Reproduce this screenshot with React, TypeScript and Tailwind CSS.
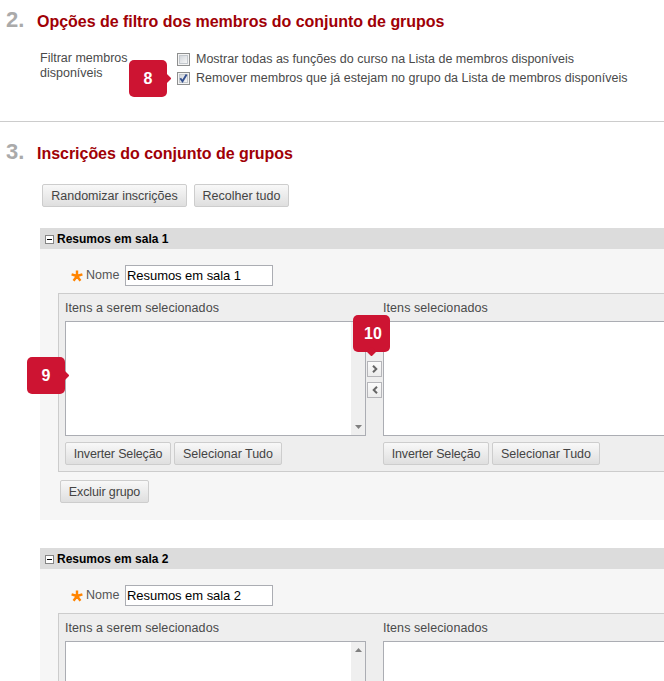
import type { ReactNode } from "react";

function PushButton({ className, children }: { className: string; children: ReactNode }) {
  return (
    <button
      type="button"
      className={`h-[23px] shrink-0 rounded-[2px] border border-[#cdcdcd] bg-linear-to-b from-[#f8f8f8] to-[#dfdfdf] pt-px text-center text-[12.5px] leading-[20px] whitespace-nowrap text-[#444] ${className}`}
    >
      {children}
    </button>
  );
}

function StepHeading({ step, title }: { step: string; title: string }) {
  return (
    <h2 className="flex h-[26px] items-baseline pl-[6px] font-bold">
      <span className="w-[31px] text-[22px] leading-[26px] text-[#aaa]">{step}</span>
      <span className="text-[16px] leading-[26px] tracking-[-0.03px] whitespace-nowrap text-[#a00006]">{title}</span>
    </h2>
  );
}

function Checkbox({ checked }: { checked?: boolean }) {
  return (
    <span className="flex size-[13px] shrink-0 items-center justify-center border border-[#8e8f8f] bg-[#f4f4f4]">
      <span className="flex size-[9px] items-center justify-center border border-[#c3c8cd] bg-linear-to-br from-[#d3d7dc] to-[#f6f6f6]">
        {checked && (
          <svg viewBox="0 0 9 9" className="size-[9px] shrink-0 overflow-visible" fill="none">
            <path d="M1.3 4.2 3.5 7.3 7.6 0.6" stroke="#34508f" strokeWidth="1.9" />
          </svg>
        )}
      </span>
    </span>
  );
}

function ScrollArrow({ up }: { up?: boolean }) {
  return (
    <svg viewBox="0 0 7 4" className="h-[4px] w-[7px]">
      <path d={up ? "M0 4 3.5 0 7 4Z" : "M0 0 3.5 4 7 0Z"} fill="#808080" />
    </svg>
  );
}

function MoveButton({ left }: { left?: boolean }) {
  return (
    <button
      type="button"
      className="flex h-[16px] w-[15px] items-center justify-center border border-[#b5b5b9] bg-linear-to-b from-[#fbfbfb] to-[#ececec]"
    >
      <svg viewBox="0 0 6 8" className="h-[8px] w-[6px]" fill="none" stroke="#666" strokeWidth="2">
        <path d={left ? "M5 .7 1.7 4 5 7.3" : "M1 .7 4.3 4 1 7.3"} />
      </svg>
    </button>
  );
}

type ListColumnProps = { title: string; titleClass: string; scroll?: boolean; actions: boolean };

function ListColumn({ title, titleClass, scroll, actions }: ListColumnProps) {
  return (
    <div className={scroll ? "w-[301px] shrink-0" : "w-[320px] shrink-0"}>
      <div className={`h-[27px] pt-[6px] text-[12.5px] leading-[16px] whitespace-nowrap text-[#4a4a4a] ${titleClass}`}>
        {title}
      </div>
      <div className="flex h-[115px] justify-end border border-[#abadb3] bg-white">
        {scroll && (
          <div className="flex w-[14px] flex-col items-center justify-between bg-[#efefef] py-[6px]">
            <ScrollArrow up />
            <ScrollArrow />
          </div>
        )}
      </div>
      {actions && (
        <div className="mt-[6px] flex gap-[3px]">
          <PushButton className="w-[106px] tracking-[-0.15px]">Inverter Seleção</PushButton>
          <PushButton className="w-[108px] tracking-[-0.03px]">Selecionar Tudo</PushButton>
        </div>
      )}
    </div>
  );
}

function GroupPanel({ name, actions = false }: { name: string; actions?: boolean }) {
  return (
    <section className="ml-[40px] h-[292px] bg-[#f6f6f6]">
      <header className="flex h-[21px] items-center gap-[3px] bg-[#dcdcdc] pl-[5px]">
        <span className="mt-[2px] flex size-[9px] items-center justify-center border border-[#858585] bg-white">
          <span className="h-px w-[5px] bg-black" />
        </span>
        <h3 className="text-[12px] leading-[20px] font-bold text-black">{name}</h3>
      </header>
      <div className="flex h-[44px] items-start pt-[16px] pl-[31px]">
        <svg viewBox="0 0 12 12" className="mt-[5px] size-[12px]" stroke="#ff8400" strokeWidth="2.4">
          <path d="M6 6V.5M6 6 .6 4.3M6 6 11.4 4.3M6 6 2.6 10.7M6 6 9.4 10.7" />
        </svg>
        <span className="ml-[3px] w-[39px] text-[12.5px] leading-[20px] text-[#555]">Nome</span>
        <input
          readOnly
          value={name}
          className="h-[21px] w-[148px] border border-[#abadb3] bg-white px-[1px] text-[13px] tracking-[-0.05px] text-black outline-none"
        />
      </div>
      <div className="ml-[18px] flex h-[179px] overflow-hidden border border-r-0 border-[#ccc] bg-[#eee] pl-[6px]">
        <ListColumn title="Itens a serem selecionados" titleClass="tracking-[0.07px]" scroll actions={actions} />
        <div className="flex w-[17px] shrink-0 flex-col items-center gap-[5px] pt-[67px]">
          <MoveButton />
          <MoveButton left />
        </div>
        <ListColumn title="Itens selecionados" titleClass="tracking-[0.07px]" actions={actions} />
      </div>
      {actions && (
        <div className="flex pt-[8px] pl-[20px]">
          <PushButton className="w-[89px] tracking-[-0.12px]">Excluir grupo</PushButton>
        </div>
      )}
    </section>
  );
}

function Callout({ className, tail, children }: { className: string; tail: string; children: ReactNode }) {
  return (
    <div
      className={`absolute flex h-[37px] items-center justify-center rounded-[5px] bg-[#cd1432] text-[16px] leading-none font-bold text-white ${className}`}
    >
      <span className={`absolute size-[7px] rotate-45 rounded-[1px] bg-[#cd1432] ${tail}`} />
      <span className="relative">{children}</span>
    </div>
  );
}

export default function App() {
  return (
    <main className="relative h-[681px] w-[664px] overflow-hidden bg-white font-['Liberation_Sans',Arial,sans-serif]">
      <section className="h-[122px] border-b border-[#ccc] pt-[7px]">
        <StepHeading step="2." title="Opções de filtro dos membros do conjunto de grupos" />
        <div className="flex pt-[18px] pl-[40px] text-[12.5px] text-[#4a4a4a]">
          <div className="w-[137px] leading-[15px]">
            <div>Filtrar membros</div>
            <div>disponíveis</div>
          </div>
          <div className="pt-px whitespace-nowrap">
            <label className="flex h-[19px] items-start gap-[6px] pt-px leading-[13px]">
              <Checkbox />
              Mostrar todas as funções do curso na Lista de membros disponíveis
            </label>
            <label className="flex h-[19px] items-start gap-[6px] pt-px leading-[13px] tracking-[0.02px]">
              <Checkbox checked />
              Remover membros que já estejam no grupo da Lista de membros disponíveis
            </label>
          </div>
        </div>
      </section>
      <section className="pt-[17px]">
        <StepHeading step="3." title="Inscrições do conjunto de grupos" />
        <div className="mt-[19px] flex gap-[7px] pl-[42px]">
          <PushButton className="w-[145px]">Randomizar inscrições</PushButton>
          <PushButton className="w-[95px]">Recolher tudo</PushButton>
        </div>
        <div className="mt-[21px] flex flex-col gap-[28px]">
          <GroupPanel name="Resumos em sala 1" actions />
          <GroupPanel name="Resumos em sala 2" />
        </div>
      </section>
      <Callout className="top-[60px] left-[129px] w-[38px]" tail="top-[15px] right-[-3px]">
        8
      </Callout>
      <Callout className="top-[357px] left-[27px] w-[38px]" tail="top-[15px] right-[-3px]">
        9
      </Callout>
      <Callout className="top-[315px] left-[353px] w-[37px] pl-[3px]" tail="bottom-[-3px] left-[15px]">
        10
      </Callout>
    </main>
  );
}
